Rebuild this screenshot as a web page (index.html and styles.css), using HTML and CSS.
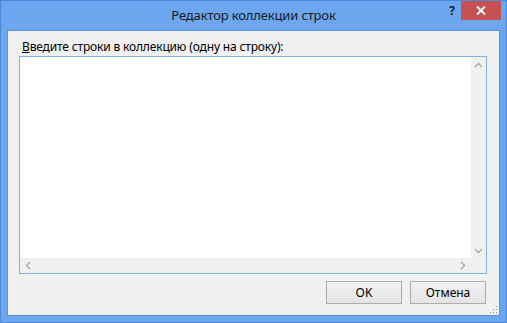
FILE: index.html
```html
<!DOCTYPE html>
<html lang="ru">
<head>
<meta charset="utf-8">
<title>Редактор коллекции строк</title>
<link rel="stylesheet" href="styles.css">
</head>
<body>
<div class="window">
  <div class="titlebar">
    <div class="spacer"></div>
    <div class="title">Редактор коллекции строк</div>
    <div class="controls">
      <span class="help">?</span>
      <span class="close">
        <svg width="10" height="9" viewBox="0 0 10 9"><path d="M1 0.5 L9 8.5 M9 0.5 L1 8.5" stroke="#fff" stroke-width="2"/></svg>
      </span>
    </div>
  </div>
  <div class="client">
    <div class="label"><u>В</u>ведите строки в коллекцию (одну на строку):</div>
    <div class="textbox">
      <div class="text-area"></div>
      <div class="vscroll">
        <svg class="arrow" width="9" height="6" viewBox="0 0 9 6"><path d="M1 5 L4.5 1.5 L8 5" fill="none" stroke="#a6a6a6" stroke-width="1.3"/></svg>
        <svg class="arrow" width="9" height="6" viewBox="0 0 9 6"><path d="M1 1 L4.5 4.5 L8 1" fill="none" stroke="#a6a6a6" stroke-width="1.3"/></svg>
      </div>
      <div class="hscroll">
        <svg class="arrow" width="6" height="9" viewBox="0 0 6 9"><path d="M5 1 L1.5 4.5 L5 8" fill="none" stroke="#a6a6a6" stroke-width="1.3"/></svg>
        <svg class="arrow" width="6" height="9" viewBox="0 0 6 9"><path d="M1 1 L4.5 4.5 L1 8" fill="none" stroke="#a6a6a6" stroke-width="1.3"/></svg>
      </div>
      <div class="corner"></div>
    </div>
    <div class="buttons">
      <button class="btn">OK</button>
      <button class="btn">Отмена</button>
    </div>
    <svg class="grip" width="8" height="8" viewBox="0 0 8 8">
      <rect x="6" y="0" width="1" height="1" fill="#9a9a9a"/>
      <rect x="3" y="3" width="1" height="1" fill="#9a9a9a"/>
      <rect x="6" y="3" width="1" height="1" fill="#9a9a9a"/>
      <rect x="0" y="6" width="1" height="1" fill="#9a9a9a"/>
      <rect x="3" y="6" width="1" height="1" fill="#9a9a9a"/>
      <rect x="6" y="6" width="1" height="1" fill="#9a9a9a"/>
    </svg>
  </div>
</div>
</body>
</html>
```
FILE: styles.css
```css
* { box-sizing: border-box; }
html, body { margin: 0; padding: 0; }
body {
  font-family: "Noto Sans", "Open Sans", sans-serif;
  background: #ffffff;
}
.window {
  width: 507px;
  height: 323px;
  background: #6ba6ee;
  border: 1px solid #4f88d4;
  display: flex;
  flex-direction: column;
}
.titlebar {
  height: 29px;
  display: grid;
  grid-template-columns: 1fr auto 1fr;
  align-items: start;
}
.title {
  font-size: 13px;
  letter-spacing: -0.15px;
  line-height: 28px;
  color: #1a1a1a;
  white-space: nowrap;
}
.controls {
  display: flex;
  justify-content: flex-end;
  align-items: flex-start;
}
.help {
  font-family: "Noto Sans", sans-serif;
  font-weight: bold;
  font-size: 12px;
  line-height: 19px;
  color: #1a1a1a;
  margin-right: 6px;
}
.close {
  width: 40px;
  height: 19px;
  background: #c75050;
  display: flex;
  align-items: center;
  justify-content: center;
  margin-right: 5px;
}
.client {
  flex: 1;
  margin: 0 6px 6px 6px;
  background: #f0f0f0;
  border: 1px solid #5a90d8;
  padding: 8px 12px 11px 11px;
  display: flex;
  flex-direction: column;
  position: relative;
}
.label {
  font-size: 12px;
  letter-spacing: -0.16px;
  line-height: 16px;
  color: #000;
  margin-left: 3px;
  white-space: nowrap;
}
.textbox {
  flex: 1;
  margin-top: 1px;
  border: 1px solid #7eb4ea;
  background: #fff;
  display: grid;
  grid-template-columns: 1fr 15px;
  grid-template-rows: 1fr 15px;
}
.vscroll {
  background: #f0f0f0;
  display: flex;
  flex-direction: column;
  justify-content: space-between;
  align-items: center;
  padding: 5px 0 4px;
}
.hscroll {
  background: #f0f0f0;
  display: flex;
  justify-content: space-between;
  align-items: center;
  padding: 0 5px 0 5px;
}
.corner { background: #f0f0f0; }
.arrow { display: block; }
.buttons {
  margin-top: 7px;
  display: flex;
  justify-content: flex-end;
  gap: 8px;
  margin-right: 1px;
}
.btn {
  width: 76px;
  height: 23px;
  border: 1px solid #adadad;
  background: linear-gradient(#f2f2f2, #e3e3e3);
  font-family: "Noto Sans", sans-serif;
  font-size: 12px;
  color: #000;
  padding: 0;
}
.grip {
  position: absolute;
  right: 1px;
  bottom: 1px;
}
```
